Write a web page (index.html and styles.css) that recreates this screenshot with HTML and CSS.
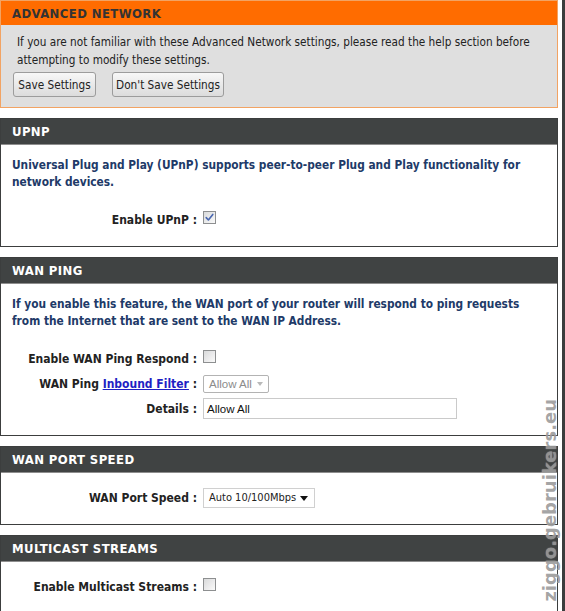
FILE: index.html
```html
<!DOCTYPE html>
<html lang="en">
<head>
<meta charset="utf-8">
<title>Advanced Network</title>
<link rel="stylesheet" href="styles.css">
</head>
<body>
<div class="frame">
  <main class="content">
    <section class="box box-intro">
      <h1 class="box-title">ADVANCED NETWORK</h1>
      <div class="box-body">
        <p class="intro-text">If you are not familiar with these Advanced Network settings, please read the help section before<br>attempting to modify these settings.</p>
        <div class="actions">
          <button class="btn btn-save" type="button">Save Settings</button>
          <button class="btn btn-discard" type="button">Don't Save Settings</button>
        </div>
      </div>
    </section>

    <section class="box">
      <h2 class="box-title">UPNP</h2>
      <div class="box-body">
        <p class="lead">Universal Plug and Play (UPnP) supports peer-to-peer Plug and Play functionality for<br>network devices.</p>
        <div class="field">
          <span class="field-label">Enable UPnP :</span>
          <span class="cbox is-checked"><svg viewBox="0 0 13 13" width="13" height="13"><path d="M3.2 6.6 L5.4 9 L9.8 3.4" fill="none" stroke="#4a67b0" stroke-width="1.6" stroke-linecap="round" stroke-linejoin="round"/></svg></span>
        </div>
      </div>
    </section>

    <section class="box">
      <h2 class="box-title">WAN PING</h2>
      <div class="box-body">
        <p class="lead">If you enable this feature, the WAN port of your router will respond to ping requests<br>from the Internet that are sent to the WAN IP Address.</p>
        <div class="field">
          <span class="field-label">Enable WAN Ping Respond :</span>
          <span class="cbox"></span>
        </div>
        <div class="field">
          <span class="field-label">WAN Ping <a href="#" class="link">Inbound Filter</a> :</span>
          <span class="select select-off">Allow All<i class="caret"></i></span>
        </div>
        <div class="field">
          <span class="field-label">Details :</span>
          <span class="textbox">Allow All</span>
        </div>
      </div>
    </section>

    <section class="box">
      <h2 class="box-title">WAN PORT SPEED</h2>
      <div class="box-body">
        <div class="field">
          <span class="field-label">WAN Port Speed :</span>
          <span class="select select-speed">Auto 10/100Mbps<i class="caret"></i></span>
        </div>
      </div>
    </section>

    <section class="box">
      <h2 class="box-title">MULTICAST STREAMS</h2>
      <div class="box-body">
        <div class="field">
          <span class="field-label">Enable Multicast Streams :</span>
          <span class="cbox"></span>
        </div>
      </div>
    </section>
  </main>
  <div class="edge"></div>
  <div class="watermark">ziggo.gebruikers.eu</div>
</div>
</body>
</html>
```

FILE: styles.css
```css
body {
  margin: 0;
  background: #fff;
  font-family: "DejaVu Sans Condensed", "DejaVu Sans", sans-serif;
  font-size: 11.7px;
  color: #222;
}

.frame {
  position: relative;
  display: flex;
  min-height: 611px;
}

.content {
  width: 558px;
  display: flex;
  flex-direction: column;
  gap: 10px;
}

.edge {
  width: 3px;
  margin-left: auto;
  background: #3b3d3d;
}

/* section boxes */
.box {
  border: 1px solid #3c3e3e;
  background: #fff;
}

.box-title {
  margin: 0;
  height: 25px;
  line-height: 26px;
  padding-left: 11px;
  background: #404343;
  border-bottom: 1px solid #8e8e8e;
  color: #fff;
  font-size: 13px;
  font-weight: bold;
  letter-spacing: 0.4px;
}

.box-body {
  padding: 12px 11px 14px;
}

.lead {
  margin: 0 0 16px;
  line-height: 17px;
  font-size: 11.8px;
  font-weight: bold;
  color: #213a68;
}

/* intro box */
.box-intro {
  border-color: #f2a363;
  background: #dfdfdf;
}

.box-intro .box-title {
  height: 24px;
  background: #ff6c00;
  border-bottom: 0;
  color: #333;
  line-height: 25px;
}

.box-intro .box-body {
  padding: 8px 12px 10px;
}

.intro-text {
  margin: 0;
  padding-left: 4px;
  line-height: 18px;
}

.actions {
  display: flex;
  gap: 16px;
  margin-top: 3px;
}

.btn {
  height: 25px;
  padding: 0;
  border: 1px solid #9c9c9c;
  border-radius: 3px;
  background: linear-gradient(#f7f7f7, #dcdcdc);
  font: 11.7px "DejaVu Sans Condensed", "DejaVu Sans", sans-serif;
  color: #222;
}

.btn-save {
  width: 83px;
}

.btn-discard {
  width: 112px;
}

/* form rows */
.field {
  display: grid;
  grid-template-columns: 185px auto;
  column-gap: 6px;
  align-items: center;
  justify-items: start;
  height: 25px;
}

.field-label {
  justify-self: end;
  font-size: 12px;
  font-weight: bold;
  color: #222;
  white-space: nowrap;
}

.link {
  color: #1f1fc4;
  text-decoration: underline;
}

.cbox {
  display: block;
  width: 11px;
  height: 11px;
  border: 1px solid #8d8f90;
  background: linear-gradient(135deg, #d9dadb, #fafafa);
  position: relative;
  top: -2px;
}

.cbox svg {
  display: block;
  margin: -1px;
}

.select {
  position: relative;
  display: flex;
  align-items: center;
  box-sizing: border-box;
  padding-left: 5px;
  background: #fff;
}

.select-off {
  width: 66px;
  height: 18px;
  border: 1px solid #b3b3b3;
  border-radius: 2px;
  color: #8c8c8c;
  font: 11.5px "Liberation Sans", Arial, sans-serif;
}

.select-speed {
  width: 112px;
  height: 20px;
  border: 1px solid #d0d0d0;
  color: #222;
  font-size: 11px;
}

.caret {
  position: absolute;
  right: 6px;
  top: 50%;
  margin-top: -2px;
  width: 0;
  height: 0;
  border-left: 4px solid transparent;
  border-right: 4px solid transparent;
  border-top: 5px solid #111;
}

.select-off .caret {
  right: 5px;
  border-left-width: 3.5px;
  border-right-width: 3.5px;
  border-top: 4px solid #b9b9b9;
}

.textbox {
  display: flex;
  align-items: center;
  box-sizing: border-box;
  width: 254px;
  height: 21px;
  padding-left: 3px;
  border: 1px solid #cacaca;
  background: #fff;
  color: #111;
  font: 11.5px "Liberation Sans", Arial, sans-serif;
}

/* site mark laid over the right edge */
.watermark {
  position: absolute;
  left: 539px;
  top: 399px;
  writing-mode: vertical-rl;
  transform: rotate(180deg);
  font: bold 18px "DejaVu Sans", sans-serif;
  color: rgba(140, 140, 140, 0.8);
  text-shadow: 0 0 1px rgba(255, 255, 255, 0.6);
  white-space: nowrap;
}
```
